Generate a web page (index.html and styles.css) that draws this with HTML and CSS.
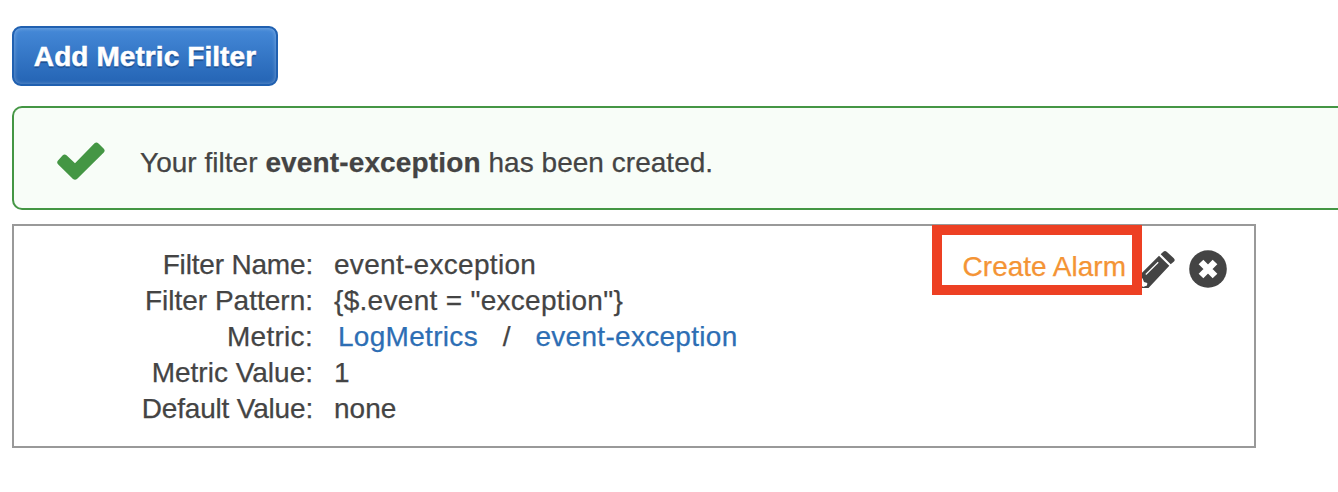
FILE: index.html
```html
<!DOCTYPE html>
<html lang="en">
<head>
<meta charset="utf-8">
<title>Metric Filters</title>
<link rel="stylesheet" href="styles.css">
</head>
<body>
<main class="page">
  <button class="add-button" type="button"><span class="add-label">Add Metric Filter</span></button>
  <div class="notice">
    <svg class="check" width="50" height="40" viewBox="0 0 50 40"><path d="M10.500 13.300 19 21.300 38.500 1.300Q40.500-.3 42.500 1.500L47.800 6.700Q49.500 8.500 47.800 10.500L21 37Q19 38.500 17 37L2 22.300Q.3 20.300 2 18.400L6.500 13.500Q8.500 11.500 10.500 13.300Z"/></svg>
    <p class="notice-text">Your filter <strong>event-exception</strong> has been created.</p>
  </div>
  <section class="card">
    <dl class="details">
      <dt class="tight">Filter Name:</dt><dd class="wide">event-exception</dd>
      <dt>Filter Pattern:</dt><dd class="wide">{$.event = "exception"}</dd>
      <dt class="wide">Metric:</dt><dd class="metric wide"><a>LogMetrics</a><span>/</span><a>event-exception</a></dd>
      <dt>Metric Value:</dt><dd>1</dd>
      <dt class="tight">Default Value:</dt><dd>none</dd>
    </dl>
    <div class="actions">
      <a class="create">Create Alarm</a>
      <svg class="pencil" width="40" height="40" viewBox="1137 250 40 40"><path d="M1160.700 254.300 1163.300 251.700Q1165 250.300 1166.700 251.700L1173.800 258.200Q1175.500 260 1174 261.500L1170.700 264.200ZM1159 255.700 1169.300 265.700 1148.500 288 1138 288 1139.500 275.200Z"/><path class="cut" d="M1139 279.500 1142.500 278.200 1144 282 1147.300 283 1147 285.500 1143 287 1139 283Z"/><path class="shine" d="M1145.800 274.500 1158.200 262.300"/></svg>
      <svg class="close" width="38" height="38" viewBox="0 0 38 38"><circle cx="19" cy="19" r="18.800"/><path class="cross" d="M12 12 26 26M26 12 12 26"/></svg>
    </div>
  </section>
</main>
</body>
</html>
```
FILE: styles.css
```css
*, *::after { box-sizing: border-box; }
body {
  margin: 0;
  background: #fff;
  color: #444;
  font: 28px/36px "Liberation Sans", Arial, sans-serif;
  -webkit-text-stroke: .25px;
  overflow: hidden;
}
.page { padding: 26px 0 0 12px; }
.add-button {
  display: flex;
  align-items: center;
  justify-content: center;
  width: 266px;
  height: 60px;
  padding: 2px 0 0;
  border: 2px solid #2060b0;
  border-radius: 9px;
  background: linear-gradient(#4589d8, #2464b4);
  box-shadow: inset 0 0 4px rgba(255, 255, 255, .35);
  color: #fff;
  font: bold 28px/36px "Liberation Sans", Arial, sans-serif;
  letter-spacing: .08px;
  text-shadow: 0 2px 1px #1d4f91;
  -webkit-text-stroke: .5px;
}
.notice {
  display: flex;
  align-items: center;
  height: 104px;
  margin: 20px -12px 14px 0;
  padding: 7px 0 0 42px;
  border: 2px solid #449644;
  border-right: 0;
  border-radius: 10px 0 0 10px;
  background: #f8fdf8;
}
.check { fill: #449644; }
.notice-text { margin: 2px 0 0 34px; white-space: nowrap; letter-spacing: .03px; }
.notice-text strong { letter-spacing: .14px; }
.card {
  display: flex;
  justify-content: space-between;
  width: 1244px;
  height: 224px;
  padding: 21px 27px 0 0;
  border: 2px solid #999;
}
.details {
  display: grid;
  grid-template-columns: 299px auto;
  column-gap: 21px;
  align-content: start;
  margin: 0;
  white-space: nowrap;
}
.details dt { text-align: right; }
.details dd { margin: 0; }
.details .wide { letter-spacing: .3px; }
.details .tight { letter-spacing: -.18px; }
.metric { display: flex; padding-left: 4px; gap: 24.700px; }
.metric a { color: #2d6eb4; }
.actions { display: flex; align-items: flex-start; }
.create {
  position: relative;
  margin: 2px 11px 0 0;
  color: #f49435;
  white-space: nowrap;
}
.create::after {
  content: "";
  position: absolute;
  z-index: 1;
  top: -24px;
  right: -16px;
  width: 210px;
  height: 70px;
  border: 10px solid #ed4023;
}
.pencil { margin: 3px 12px 0 0; fill: #444; }
.cut { fill: #fff; }
.shine { stroke: #fff; stroke-width: 1.2; }
.close { margin-top: 3px; fill: #444; }
.cross { stroke: #fff; stroke-width: 6.6; }
```
